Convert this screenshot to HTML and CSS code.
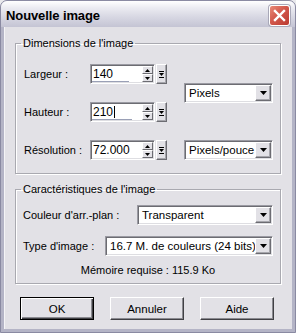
FILE: index.html
```html
<!DOCTYPE html>
<html lang="fr">
<head>
<meta charset="utf-8">
<title>Nouvelle image</title>
<link rel="stylesheet" href="styles.css">
</head>
<body>
<div class="window">
  <div class="titlebar">
    <span class="title">Nouvelle image</span>
    <span class="close"><svg width="21" height="21" viewBox="0 0 21 21"><path d="M6 6 L15 15 M15 6 L6 15" stroke="#fff" stroke-width="2.4" stroke-linecap="square"/></svg></span>
  </div>
  <div class="client">
    <fieldset class="group g1">
      <legend>Dimensions de l'image</legend>
      <div class="dimgrid">
        <span class="lbl r1">Largeur :</span>
        <div class="field r1">
          <div class="edit sunken">
            <div class="val"><span class="num">140</span><span class="bar" style="width:37px"></span></div>
            <div class="spin"><span class="sb"><svg width="5" height="3"><path d="M0 3 L2.5 0 L5 3Z" fill="#000"/></svg></span><span class="sb"><svg width="5" height="3"><path d="M0 0 L5 0 L2.5 3Z" fill="#000"/></svg></span></div>
          </div>
          <span class="pop raised"><svg width="7" height="9" viewBox="0 0 7 9"><path d="M1 1.5 H6 M1 7.5 H6" stroke="#000" stroke-width="1"/><path d="M1 3 L6 3 L3.5 6Z" fill="#000"/></svg></span>
        </div>
        <div class="combo sunken unit1"><span class="txt">Pixels</span><span class="cbtn raised"><svg width="7" height="4"><path d="M0 0 L7 0 L3.5 4Z" fill="#000"/></svg></span></div>

        <span class="lbl r2">Hauteur :</span>
        <div class="field r2">
          <div class="edit sunken">
            <div class="val"><span class="num">210<span class="caret"></span></span><span class="bar" style="width:40px"></span></div>
            <div class="spin"><span class="sb"><svg width="5" height="3"><path d="M0 3 L2.5 0 L5 3Z" fill="#000"/></svg></span><span class="sb"><svg width="5" height="3"><path d="M0 0 L5 0 L2.5 3Z" fill="#000"/></svg></span></div>
          </div>
          <span class="pop raised"><svg width="7" height="9" viewBox="0 0 7 9"><path d="M1 1.5 H6 M1 7.5 H6" stroke="#000" stroke-width="1"/><path d="M1 3 L6 3 L3.5 6Z" fill="#000"/></svg></span>
        </div>

        <span class="lbl r3">Résolution :</span>
        <div class="field r3">
          <div class="edit sunken">
            <div class="val"><span class="num">72.000</span><span class="bar" style="width:0px"></span></div>
            <div class="spin"><span class="sb"><svg width="5" height="3"><path d="M0 3 L2.5 0 L5 3Z" fill="#000"/></svg></span><span class="sb"><svg width="5" height="3"><path d="M0 0 L5 0 L2.5 3Z" fill="#000"/></svg></span></div>
          </div>
          <span class="pop raised"><svg width="7" height="9" viewBox="0 0 7 9"><path d="M1 1.5 H6 M1 7.5 H6" stroke="#000" stroke-width="1"/><path d="M1 3 L6 3 L3.5 6Z" fill="#000"/></svg></span>
        </div>
        <div class="combo sunken unit3"><span class="txt">Pixels/pouce</span><span class="cbtn raised"><svg width="7" height="4"><path d="M0 0 L7 0 L3.5 4Z" fill="#000"/></svg></span></div>
      </div>
    </fieldset>

    <fieldset class="group g2">
      <legend>Caractéristiques de l'image</legend>
      <div class="row">
        <span class="lbl">Couleur d'arr.-plan :</span>
        <div class="combo sunken bg"><span class="txt">Transparent</span><span class="cbtn raised"><svg width="7" height="4"><path d="M0 0 L7 0 L3.5 4Z" fill="#000"/></svg></span></div>
      </div>
      <div class="row second">
        <span class="lbl">Type d'image :</span>
        <div class="combo sunken type"><span class="txt">16.7 M. de couleurs (24 bits)</span><span class="cbtn raised"><svg width="7" height="4"><path d="M0 0 L7 0 L3.5 4Z" fill="#000"/></svg></span></div>
      </div>
      <div class="mem">Mémoire requise : 115.9 Ko</div>
    </fieldset>

    <div class="buttons">
      <span class="btn default">OK</span>
      <span class="btn">Annuler</span>
      <span class="btn">Aide</span>
    </div>
  </div>
</div>
</body>
</html>
```

FILE: styles.css
```css
html, body {
  margin: 0;
  padding: 0;
  background: #e9e9ec;
}
body {
  font-family: "Liberation Sans", Arial, sans-serif;
  font-size: 11px;
  color: #000;
}
.window {
  width: 296px;
  height: 333px;
  box-sizing: border-box;
  border-radius: 7px 7px 0 0;
  background: #b4b4c6;
  border: 1px solid #8a8aa2;
  display: flex;
  flex-direction: column;
  overflow: hidden;
}
.titlebar {
  height: 26px;
  flex: none;
  box-sizing: border-box;
  display: flex;
  align-items: center;
  justify-content: space-between;
  padding: 3px 5px 0 5px;
  background: linear-gradient(#ffffff 0%, #ececf2 25%, #d8d8e3 60%, #c4c4d4 100%);
}
.title {
  font-weight: bold;
  font-size: 13px;
  letter-spacing: -0.1px;
}
.close {
  width: 21px;
  height: 21px;
  box-sizing: border-box;
  border: 1px solid #fff;
  border-radius: 3px;
  background: linear-gradient(135deg, #e88a78 0%, #d2584c 45%, #bb3a30 100%);
  display: flex;
  align-items: center;
  justify-content: center;
  box-shadow: 0 0 0 1px #a8a8b8;
}
.close svg {
  display: block;
  margin: -1px;
}
.client {
  flex: 1;
  margin: 0 3px 3px 3px;
  background: #e2e1e6;
  display: flex;
  flex-direction: column;
  border-left: 1px solid #f4f4f6;
}
.group {
  margin: 0 11px 0 10px;
  padding: 0;
  min-width: 0;
  border: 1px solid #a9a9b0;
  box-shadow: 1px 1px 0 #fff, inset 1px 1px 0 #fff;
}
.group legend {
  margin-left: 5px;
  padding: 0 2px;
  line-height: 13px;
}
.g1 {
  margin-top: 10px;
}
.g2 {
  margin-top: 9px;
}
.dimgrid {
  display: grid;
  grid-template-columns: 66px 77px 17px 89px;
  grid-template-rows: 20px 20px 20px;
  row-gap: 18px;
  margin: 14px 0 13px 8px;
}
.lbl {
  display: flex;
  align-items: center;
  white-space: nowrap;
}
.r1 { grid-row: 1; }
.r2 { grid-row: 2; }
.r3 { grid-row: 3; }
.unit1 {
  grid-column: 4;
  grid-row: 1 / 3;
  align-self: center;
}
.unit3 {
  grid-column: 4;
  grid-row: 3;
}
.sunken {
  box-sizing: border-box;
  border: 1px solid;
  border-color: #9a9aa2 #ffffff #ffffff #9a9aa2;
  box-shadow: inset 1px 1px 0 #6c6c72, inset -1px -1px 0 #dedee2;
  background: #fff;
}
.raised {
  box-sizing: border-box;
  background: #e2e1e6;
  border: 1px solid;
  border-color: #ffffff #6c6c72 #6c6c72 #ffffff;
  box-shadow: inset -1px -1px 0 #a6a6ac;
  display: flex;
  align-items: center;
  justify-content: center;
}
.field {
  display: flex;
  gap: 1px;
  height: 20px;
}
.edit {
  width: 65px;
  height: 20px;
  display: flex;
  padding: 1px;
}
.val {
  flex: 1;
  display: flex;
  flex-direction: column;
  justify-content: space-between;
  padding-left: 1px;
}
.num {
  line-height: 14px;
  padding-top: 1px;
  font-size: 12px;
}
.caret {
  display: inline-block;
  width: 1px;
  height: 12px;
  background: #000;
  vertical-align: -2px;
  margin-left: 1px;
}
.bar {
  height: 2px;
  background: #9aa0b6;
  margin-left: -1px;
}
.spin {
  width: 11px;
  display: flex;
  flex-direction: column;
}
.sb {
  flex: 1;
  box-sizing: border-box;
  background: #e2e1e6;
  border: 1px solid;
  border-color: #ffffff #6c6c72 #6c6c72 #ffffff;
  display: flex;
  align-items: center;
  justify-content: center;
}
.sb svg, .pop svg, .cbtn svg {
  display: block;
}
.pop {
  width: 11px;
  height: 20px;
}
.combo {
  height: 20px;
  display: flex;
  padding: 1px;
}
.combo .txt {
  flex: 1;
  padding-left: 3px;
  line-height: 16px;
  font-size: 11.5px;
  white-space: nowrap;
  overflow: hidden;
}
.cbtn {
  width: 16px;
  height: 16px;
  flex: none;
}
.row {
  display: flex;
  align-items: center;
  justify-content: space-between;
  padding: 0 7px 0 7px;
  margin-top: 9px;
  height: 20px;
}
.row.second {
  margin-top: 11px;
}
.combo.bg {
  width: 136px;
}
.combo.type {
  width: 168px;
}
.mem {
  text-align: center;
  line-height: 13px;
  margin: 8px 0 6px 0;
}
.buttons {
  display: flex;
  gap: 16px;
  margin: 13px 0 0 15px;
}
.btn {
  width: 74px;
  height: 23px;
  box-sizing: border-box;
  display: flex;
  align-items: center;
  justify-content: center;
  font-size: 11.5px;
  background: #e2e1e6;
  border: 1px solid;
  border-color: #ffffff #404044 #404044 #ffffff;
  box-shadow: inset -1px -1px 0 #8a8a90;
}
.btn.default {
  border-color: #000;
  box-shadow: inset 1px 1px 0 #fff, inset -1px -1px 0 #404044, inset -2px -2px 0 #8a8a90;
}
```
